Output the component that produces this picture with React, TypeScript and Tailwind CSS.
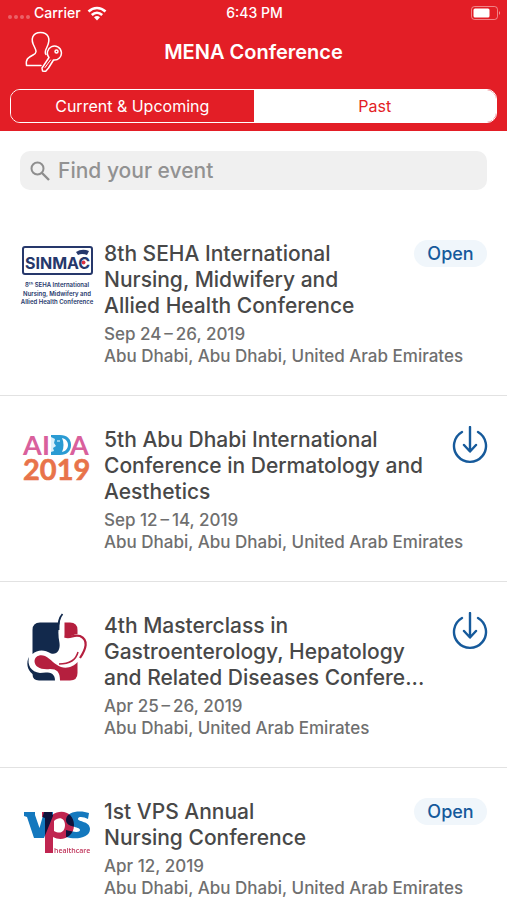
import { useState, type ReactNode } from "react";

type ConferenceEvent = {
  title: string[];
  dates: string;
  place: string;
  action: "open" | "download";
  logo: ReactNode;
};

function SinmacLogo() {
  return (
    <svg viewBox="0 0 72 72" className="size-[72px] overflow-visible font-[Inter,sans-serif]" fill="#26386b" role="img" aria-label="SINMAC">
      <rect x="2" y="7" width="69" height="27" rx="2" fill="none" stroke="#26386b" strokeWidth="2" />
      <text x="4" y="29" fontSize="16" fontWeight="700">SINMAC</text>
      <path d="M55 12q6-4 13-1l-2 4q-5-2-9 0z" />
      <circle cx="62.500" cy="22.500" r="2" fill="#dd3342" />
      <g fontSize="6" fontWeight="600" textAnchor="middle">
        <text x="36" y="47">8ᵗʰ SEHA International</text>
        <text x="36" y="56">Nursing, Midwifery and</text>
        <text x="36" y="64">Allied Health Conference</text>
      </g>
    </svg>
  );
}

function AidaLogo() {
  return (
    <svg viewBox="0 0 72 72" className="size-[72px] overflow-visible font-[Lato,sans-serif]" role="img" aria-label="AIDA 2019">
      <g fill="#d9609c" fontSize="27" fontWeight="700">
        <text x="2" y="29">A</text>
        <text x="21" y="29">I</text>
        <text x="49" y="29">A</text>
      </g>
      <path d="M30 9h9c7 0 11 4 11 10s-4 10-11 10h-9z" fill="#2a9bd3" />
      <path d="M41 12c4 1 6 4 6 7s-2 6-6 7c2-4 2-10 0-14z" fill="#fff" />
      <path d="M30 11l4 2-1 4 2 3-3 2 1 3-3 1z" fill="#d9f0fa" />
      <path d="M36 15h3" stroke="#d9f0fa" strokeWidth="1.200" />
      <text x="2" y="54" fill="#e8734a" stroke="#e8734a" strokeWidth="0.600" fontSize="29" fontWeight="700">2019</text>
    </svg>
  );
}

function GastroLogo() {
  return (
    <svg viewBox="0 0 72 72" className="size-[72px]" role="img" aria-label="Gastroenterology masterclass">
      <path d="M19 10.500H38.500C37 17 37 24 38.500 31C39.500 38 36 43 30 41.500C23 37 16 38 11.500 42V18Q11.500 10.500 19 10.500Z" fill="#12294c" />
      <path d="M43.500 10.500H49Q56.500 10.500 56.500 18V22C52 22 49 26 43.500 24.500Z" fill="#b51f3e" />
      <path d="M13.500 49C14 44 19 42 24 44C30 47 34 53 40 55C47 57 53 54 56.500 50V61Q56.500 68.500 49 68.500H39C39 60 36 57 29 57C20 58 13.500 55 13.500 49Z" fill="#b51f3e" />
      <path d="M41.500 2C38 6 37.500 10 37.500 18" fill="none" stroke="#12294c" strokeWidth="1.800" />
      <path d="M8 45C6 53 10 60 19 61C27 60 34 60 34 68.500H18Q11.500 68.500 11.500 62C6 58 5 50 8 45Z" fill="#12294c" />
      <path d="M43.500 24.500C50 27 52 22 59 24C68 28 65 37 59 46" fill="none" stroke="#b51f3e" strokeWidth="2.200" />
      <path d="M57 40C55 48 48 52 38 52" fill="none" stroke="#b51f3e" strokeWidth="1.500" />
    </svg>
  );
}

function VpsLogo() {
  return (
    <svg viewBox="0 0 72 72" className="isolate size-[72px] overflow-visible font-[Open_Sans,sans-serif]" role="img" aria-label="VPS healthcare">
      <path d="M3 14H14V17L18.500 30L23 14H32V18L23 40H13L6 19L3 18Z" fill="#1478be" />
      <path d="M68 15C60 12 45 13 45 22C45 30 59 28 59 32C59 35 52 34 45 32V39C55 42 69 40 69 31C69 23 57 24 57 21C57 18 63 19 67 21Z" fill="#1478be" />
      <path fillRule="evenodd" d="M21 14H31V17C41 10 53 15 53 27C53 39 41 44 32 39V55H24V20L21 19ZM33 23V33C40 37 44 33 44 27C44 20 38 18 33 23Z" fill="#c02550" className="mix-blend-multiply" />
      <text x="33" y="55" fill="#c0345a" fontSize="7" fontWeight="600">healthcare</text>
    </svg>
  );
}

const events: ConferenceEvent[] = [
  {
    title: ["8th SEHA International", "Nursing, Midwifery and", "Allied Health Conference"],
    dates: "Sep 24\u2009–\u200926, 2019",
    place: "Abu Dhabi, Abu Dhabi, United Arab Emirates",
    action: "open",
    logo: <SinmacLogo />,
  },
  {
    title: ["5th Abu Dhabi International", "Conference in Dermatology and", "Aesthetics"],
    dates: "Sep 12\u2009–\u200914, 2019",
    place: "Abu Dhabi, Abu Dhabi, United Arab Emirates",
    action: "download",
    logo: <AidaLogo />,
  },
  {
    title: ["4th Masterclass in", "Gastroenterology, Hepatology", "and Related Diseases Confere..."],
    dates: "Apr 25\u2009–\u200926, 2019",
    place: "Abu Dhabi, United Arab Emirates",
    action: "download",
    logo: <GastroLogo />,
  },
  {
    title: ["1st VPS Annual", "Nursing Conference"],
    dates: "Apr 12, 2019",
    place: "Abu Dhabi, Abu Dhabi, United Arab Emirates",
    action: "open",
    logo: <VpsLogo />,
  },
];

function StatusBar() {
  return (
    <div className="grid h-[26px] grid-cols-3 items-center pr-[6px] pl-2 text-sm font-medium">
      <div className="flex items-center gap-[6px]">
        <div className="flex items-center gap-1">
          <div className="flex gap-[2px] pt-2">
            <i className="size-[4px] rounded-full bg-white/30" />
            <i className="size-[4px] rounded-full bg-white/30" />
            <i className="size-[4px] rounded-full bg-white/30" />
            <i className="size-[4px] rounded-full bg-white/30" />
          </div>
          <span>Carrier</span>
        </div>
        <svg viewBox="0 0 20 15" className="h-[15px] w-[20px]" fill="none" stroke="currentColor" strokeWidth="2.600" aria-hidden="true">
          <path d="M1.500 5.500C6.500 .9 13.500 .9 18.500 5.500M4.800 9C8 6 12 6 15.200 9" />
          <path d="M7 11.300Q10 8.800 13 11.300L10 14.500Z" fill="currentColor" stroke="none" />
        </svg>
      </div>
      <span className="text-center">6:43 PM</span>
      <svg viewBox="0 0 30 14" className="h-[14px] w-[30px] justify-self-end" fill="none" role="img" aria-label="Battery">
        <rect x=".5" y=".5" width="26" height="13" rx="3" stroke="#fff" strokeOpacity=".45" />
        <rect x="2.5" y="2.5" width="16" height="9" rx="1.5" fill="#fff" />
        <path d="M28 5q2 2 0 4z" fill="#fff" fillOpacity=".55" />
      </svg>
    </div>
  );
}

function AccountIcon() {
  return (
    <svg viewBox="0 0 40 42" className="h-[42px] w-[40px]" fill="none" stroke="currentColor" strokeWidth="1.500" strokeLinecap="round" strokeLinejoin="round" aria-hidden="true">
      <path d="M17 35.500H2.500C1.500 29 4 27.500 9 25C13 23 12.500 21 10.500 17C6 9 8.500 2.500 16.500 2.500S27 9 23 17C21.500 20 20.500 23 22 24.500" />
      <path d="M25 27.500A7 7 0 1 1 29.500 30L27 34L24.500 38L21.500 41.500L18.500 41L18 38Z" />
      <circle cx="32.500" cy="21.500" r="1.500" />
      <path d="M26.500 30L21 37.500" strokeWidth="1" />
    </svg>
  );
}

function EventRow({ event }: { event: ConferenceEvent }) {
  return (
    <li className="flex border-b border-[#e2e2e2] pt-[30px] pr-5 pb-7">
      <div className="w-[104px] shrink-0 pl-[21px]">{event.logo}</div>
      <div className="min-w-0 flex-1">
        <div className="flex items-start justify-between">
          <h2 className="min-w-0 pt-px text-[21px] leading-[26px] font-[450] text-[#484848]">
            {event.title.map((line) => (
              <span key={line} className="block whitespace-nowrap">
                {line}
              </span>
            ))}
          </h2>
          {event.action === "open" ? (
            <button type="button" className="h-[27px] w-[73px] shrink-0 rounded-full bg-[#f0f6fb] text-lg leading-[27px] font-medium text-[#165a9b]">
              Open
            </button>
          ) : (
            <button type="button" aria-label="Download event" className="-mr-px shrink-0 text-[#165a9b]">
              <svg viewBox="0 0 36 38" className="h-[38px] w-[36px]" fill="none" stroke="currentColor" strokeWidth="2.400" strokeLinecap="round" strokeLinejoin="round" aria-hidden="true">
                <path d="M10 6A16 16 0 1 0 26 6M18 1V25M12 19L18 25.500L24 19" />
              </svg>
            </button>
          )}
        </div>
        <p className="mt-1 text-[17px] leading-[22px] font-[450] text-[#6f6f6f]">{event.dates}</p>
        <p className="text-[17px] leading-[22px] font-[450] text-[#6f6f6f]">{event.place}</p>
      </div>
    </li>
  );
}

export default function App() {
  const [tab, setTab] = useState<"current" | "past">("past");
  const on = "bg-white text-[#e31e26]";
  const off = "bg-[#e31e26] text-white";

  return (
    <div className="h-screen overflow-hidden bg-white font-[Inter,sans-serif]">
      <header className="bg-[#e31e26] pb-2 text-white">
        <StatusBar />
        <div className="grid h-[63px] grid-cols-[64px_1fr_64px] items-start">
          <button type="button" aria-label="Account" className="justify-self-end pt-1">
            <AccountIcon />
          </button>
          <h1 className="pt-[11px] text-center text-xl leading-[30px] font-semibold">MENA Conference</h1>
        </div>
        <div role="tablist" className="mx-[10px] grid h-[34px] grid-cols-2 overflow-hidden rounded-[10px] border border-white text-base">
          <button type="button" role="tab" aria-selected={tab === "current"} onClick={() => setTab("current")} className={tab === "current" ? on : off}>
            Current &amp; Upcoming
          </button>
          <button type="button" role="tab" aria-selected={tab === "past"} onClick={() => setTab("past")} className={tab === "past" ? on : off}>
            Past
          </button>
        </div>
      </header>
      <main>
        <label className="mx-5 mt-5 mb-5 flex h-[39px] items-center gap-2 rounded-[10px] bg-[#f0f0f0] pr-3 pl-[10px]">
          <svg viewBox="0 0 20 20" className="size-5 shrink-0" fill="none" stroke="#8e8e8e" strokeWidth="2" aria-hidden="true">
            <circle cx="7.5" cy="7.5" r="6" />
            <path d="M12 12L19 19" strokeWidth="2.400" />
          </svg>
          <input type="search" aria-label="Find your event" placeholder="Find your event" className="min-w-0 flex-1 bg-transparent text-[21px] leading-[30px] font-[450] outline-none placeholder:text-[#929292]" />
        </label>
        <ul>
          {events.map((event) => (
            <EventRow key={event.title[0]} event={event} />
          ))}
        </ul>
      </main>
    </div>
  );
}
